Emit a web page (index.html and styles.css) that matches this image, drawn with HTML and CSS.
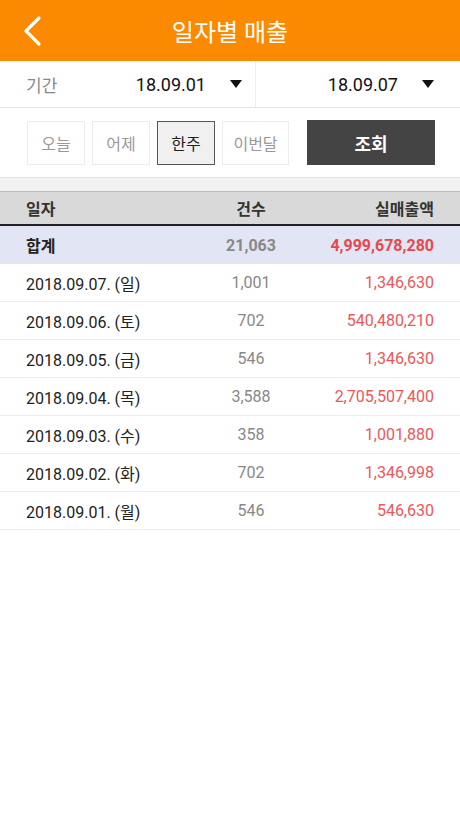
FILE: index.html
```html
<!DOCTYPE html>
<html lang="ko">
<head>
  <meta charset="UTF-8" />
  <title>일자별 매출</title>
  <link rel="stylesheet" href="styles.css">
</head>
<body>

  <header class="topbar">
    <button class="back" aria-label="뒤로">
      <svg width="22" height="32" viewBox="0 0 22 32">
        <polyline points="18,3 5,16 18,29" fill="none" stroke="#fff" stroke-width="3.2" stroke-linecap="round" stroke-linejoin="round"/>
      </svg>
    </button>
    <h1>일자별 매출</h1>
  </header>

  <div class="period">
    <div class="period-cell first">
      <span class="label">기간</span>
      <span class="date">18.09.01</span>
      <span class="caret"></span>
    </div>
    <div class="period-cell second">
      <span class="date">18.09.07</span>
      <span class="caret"></span>
    </div>
  </div>

  <div class="quick">
    <button class="chip">오늘</button>
    <button class="chip">어제</button>
    <button class="chip active">한주</button>
    <button class="chip wide">이번달</button>
    <button class="search">조회</button>
  </div>

  <div class="gap"></div>

  <div class="table">
    <div class="row head">
      <span>일자</span><span class="cnt">건수</span><span class="amt">실매출액</span>
    </div>
    <div class="row total">
      <span>합계</span><span class="cnt">21,063</span><span class="amt">4,999,678,280</span>
    </div>
    <div id="rows"></div>
  </div>

  <script>
    const data = [
      ['2018.09.07. (일)', '1,001', '1,346,630'],
      ['2018.09.06. (토)', '702', '540,480,210'],
      ['2018.09.05. (금)', '546', '1,346,630'],
      ['2018.09.04. (목)', '3,588', '2,705,507,400'],
      ['2018.09.03. (수)', '358', '1,001,880'],
      ['2018.09.02. (화)', '702', '1,346,998'],
      ['2018.09.01. (월)', '546', '546,630']
    ];
    const rows = document.getElementById('rows');
    data.forEach(d => {
      const row = document.createElement('div');
      row.className = 'row';
      ['', 'cnt', 'amt'].forEach((cls, i) => {
        const s = document.createElement('span');
        if (cls) s.className = cls;
        s.textContent = d[i];
        row.appendChild(s);
      });
      rows.appendChild(row);
    });
  </script>

</body>
</html>
```

FILE: styles.css
```css
* {
  margin: 0;
  padding: 0;
  box-sizing: border-box;
  font-family: Roboto, "Noto Sans CJK KR", sans-serif;
}

body {
  background: #fff;
  color: #222;
  width: 460px;
}

button {
  font-family: inherit;
  cursor: pointer;
}

.topbar {
  height: 61px;
  background: #fb8a00;
  display: flex;
  align-items: center;
  justify-content: center;
  position: relative;
}

.topbar h1 {
  color: #fff;
  font-size: 24px;
  font-weight: 400;
}

.back {
  position: absolute;
  left: 21px;
  top: 14px;
  background: none;
  border: none;
  width: 24px;
  height: 34px;
  display: flex;
  align-items: center;
}

.period {
  display: flex;
  height: 47px;
  border-bottom: 1px solid #e6e6e6;
}

.period-cell {
  display: flex;
  align-items: center;
}

.period-cell.first {
  width: 256px;
  padding-left: 26px;
  padding-right: 13px;
  border-right: 1px solid #eeeeee;
}

.period-cell.second {
  flex: 1;
  justify-content: flex-end;
  padding-right: 26px;
}

.label {
  flex: 1;
  font-size: 17px;
  color: #888;
}

.date {
  font-size: 18px;
  color: #111;
}

.caret {
  width: 0;
  height: 0;
  border-left: 6px solid transparent;
  border-right: 6px solid transparent;
  border-top: 8px solid #111;
  margin-left: 24px;
}

.quick {
  display: flex;
  align-items: center;
  height: 69px;
  padding-left: 27px;
  gap: 7px;
}

.chip {
  width: 58px;
  height: 44px;
  background: #fff;
  border: 1px solid #ececec;
  font-size: 16px;
  color: #999;
}

.chip.wide {
  width: 67px;
}

.chip.active {
  background: #f0f0f0;
  border: 1.5px solid #555;
  color: #222;
}

.search {
  margin-left: 11px;
  width: 128px;
  height: 45px;
  background: #444;
  border: none;
  color: #fff;
  font-size: 18px;
  font-weight: 700;
}

.gap {
  height: 14px;
  background: #f2f2f2;
  border-top: 1px solid #e4e4e4;
}

.row {
  display: grid;
  grid-template-columns: 175px 100px 1fr;
  align-items: center;
  height: 38px;
  padding: 0 26px;
  border-bottom: 1px solid #ececec;
  font-size: 16px;
  color: #222;
}

.row .cnt {
  text-align: center;
  color: #888;
}

.row .amt {
  text-align: right;
  color: #e9585b;
}

.row.head {
  height: 35px;
  background: #d9d9d9;
  border-top: 1px solid #bdbdbd;
  border-bottom: 2px solid #222;
  font-weight: 700;
  color: #333;
}

.row.head .cnt,
.row.head .amt {
  color: #333;
}

.row.total {
  background: #e1e5f4;
  font-weight: 700;
  border-bottom: none;
}

.row.total .cnt {
  color: #888;
}

.row.total .amt {
  color: #e8484c;
}
```
